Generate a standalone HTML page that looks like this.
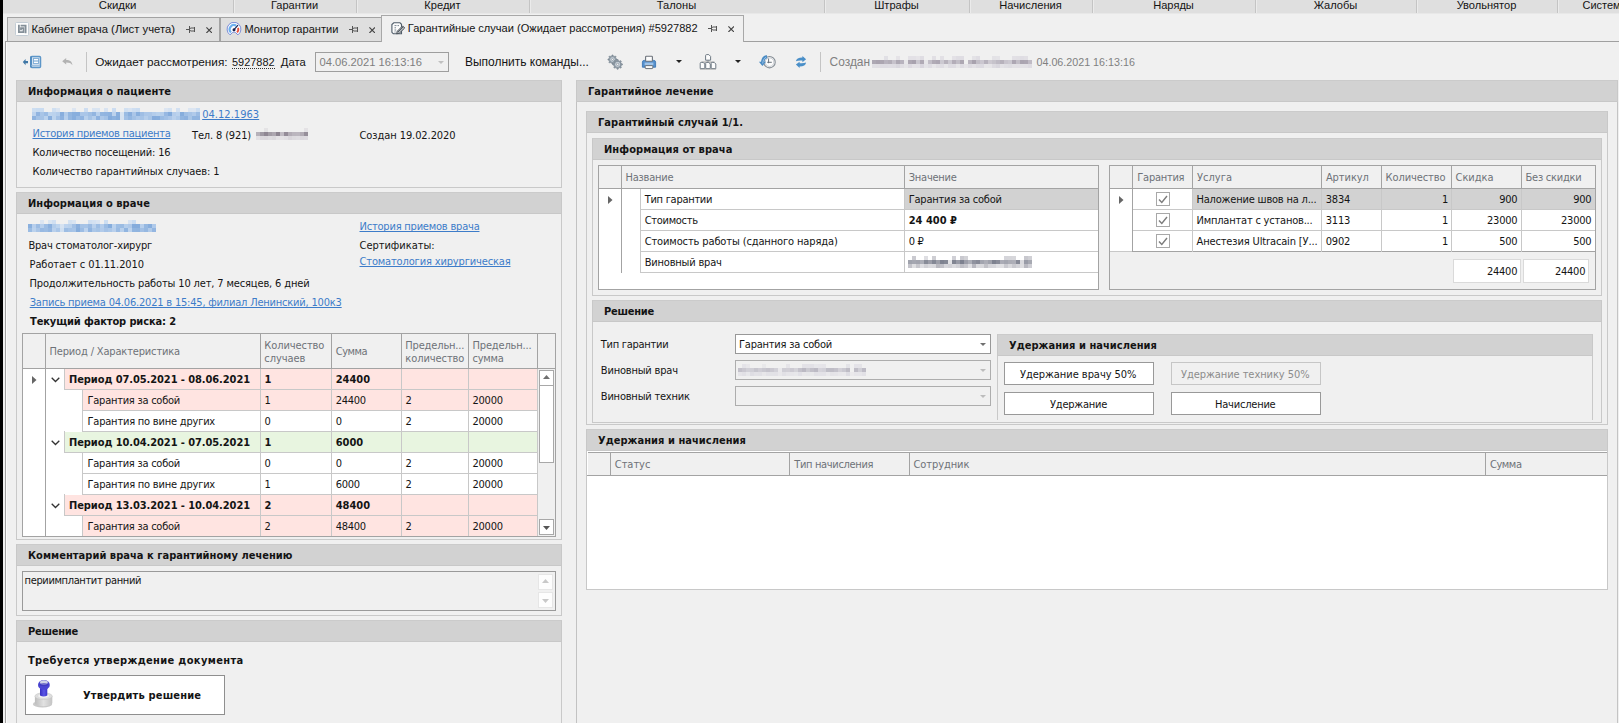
<!DOCTYPE html>
<html lang="ru"><head><meta charset="utf-8"><title>Гарантийные случаи</title>
<style>
html,body{margin:0;padding:0}
body{width:1619px;height:723px;overflow:hidden;background:#f0f0f0;position:relative;color:#141414;
 font-family:"DejaVu Sans Condensed","Liberation Sans",sans-serif;font-size:11px}
div,span,svg{position:absolute;box-sizing:border-box}
.t{font-family:"DejaVu Sans Condensed","Liberation Sans",sans-serif;font-size:11px;line-height:13px;height:13px;white-space:nowrap;letter-spacing:-0.25px}
.b{font-weight:bold;letter-spacing:0}
.s{font-family:"Liberation Sans","DejaVu Sans Condensed",sans-serif;font-size:12px;line-height:14px;height:14px;white-space:nowrap}
.u{text-decoration:underline;text-decoration-skip-ink:none;text-decoration-thickness:1px;color:#3d7cc9}
.h{color:#6e7278}
</style></head>
<body>
<div style="left:0px;top:0px;width:3px;height:723px;background:#000;"></div>
<div style="left:3px;top:0px;width:1616px;height:13px;background:#dfdfdf;"></div>
<div style="left:3px;top:13px;width:1616px;height:1px;background:#e8e8e8;"></div>
<div style="left:233px;top:0px;width:1px;height:13px;background:#c4c4c4;"></div>
<div style="left:234px;top:0px;width:1px;height:13px;background:#ebebeb;"></div>
<div style="left:356px;top:0px;width:1px;height:13px;background:#c4c4c4;"></div>
<div style="left:357px;top:0px;width:1px;height:13px;background:#ebebeb;"></div>
<div style="left:529px;top:0px;width:1px;height:13px;background:#c4c4c4;"></div>
<div style="left:530px;top:0px;width:1px;height:13px;background:#ebebeb;"></div>
<div style="left:824px;top:0px;width:1px;height:13px;background:#c4c4c4;"></div>
<div style="left:825px;top:0px;width:1px;height:13px;background:#ebebeb;"></div>
<div style="left:969px;top:0px;width:1px;height:13px;background:#c4c4c4;"></div>
<div style="left:970px;top:0px;width:1px;height:13px;background:#ebebeb;"></div>
<div style="left:1092px;top:0px;width:1px;height:13px;background:#c4c4c4;"></div>
<div style="left:1093px;top:0px;width:1px;height:13px;background:#ebebeb;"></div>
<div style="left:1255px;top:0px;width:1px;height:13px;background:#c4c4c4;"></div>
<div style="left:1256px;top:0px;width:1px;height:13px;background:#ebebeb;"></div>
<div style="left:1416px;top:0px;width:1px;height:13px;background:#c4c4c4;"></div>
<div style="left:1417px;top:0px;width:1px;height:13px;background:#ebebeb;"></div>
<div style="left:1557px;top:0px;width:1px;height:13px;background:#c4c4c4;"></div>
<div style="left:1558px;top:0px;width:1px;height:13px;background:#ebebeb;"></div>
<span class="s" style="left:17.5px;width:200px;text-align:center;top:-1.95px;font-size:11.40px"><span style="position:static">Скидки</span></span>
<span class="s" style="left:194.5px;width:200px;text-align:center;top:-1.82px;font-size:11.02px"><span style="position:static">Гарантии</span></span>
<span class="s" style="left:342.5px;width:200px;text-align:center;top:-1.85px;font-size:11.10px"><span style="position:static">Кредит</span></span>
<span class="s" style="left:576.5px;width:200px;text-align:center;top:-1.85px;font-size:11.10px"><span style="position:static">Талоны</span></span>
<span class="s" style="left:796.5px;width:200px;text-align:center;top:-1.85px;font-size:11.10px"><span style="position:static">Штрафы</span></span>
<span class="s" style="left:930.5px;width:200px;text-align:center;top:-1.85px;font-size:11.10px"><span style="position:static">Начисления</span></span>
<span class="s" style="left:1073.5px;width:200px;text-align:center;top:-1.85px;font-size:11.10px"><span style="position:static">Наряды</span></span>
<span class="s" style="left:1235.5px;width:200px;text-align:center;top:-1.85px;font-size:11.10px"><span style="position:static">Жалобы</span></span>
<span class="s" style="left:1386.5px;width:200px;text-align:center;top:-1.84px;font-size:11.09px"><span style="position:static">Увольнятор</span></span>
<span class="s" style="top:-1.79px;left:1582.6px;font-size:10.93px;">Система</span>
<div style="left:5px;top:41px;width:1614px;height:1px;background:#a0a0a0;"></div>
<div style="left:7px;top:17px;width:213px;height:24px;background:#dfdfdf;border:1px solid #a3a3a3;border-bottom:none;"></div>
<div style="left:220px;top:17px;width:162px;height:24px;background:#dfdfdf;border:1px solid #a3a3a3;border-bottom:none;"></div>
<div style="left:381px;top:15px;width:363px;height:27px;background:#f0f0f0;border:1px solid #a8a8a8;border-bottom:none;"></div>
<span class="s" style="top:22.09px;left:31.5px;font-size:11.29px;">Кабинет врача (Лист учета)</span>
<span class="s" style="top:22.16px;left:244.4px;font-size:11.09px;">Монитор гарантии</span>
<span class="s" style="top:21.17px;left:407.8px;font-size:11.05px;">Гарантийные случаи (Ожидает рассмотрения) #5927882</span>
<svg style="left:186px;top:26.0px" width="9" height="7" viewBox="0 0 9 7"><path d="M0 3.5H3M3.5 0V7M4 2.5L5 2H8M4 4.5L5 5H8M8.5 1V6" stroke="#555" stroke-width="1" fill="none"/></svg>
<svg style="left:205.8px;top:26.8px" width="6.4" height="6.4" viewBox="0 0 6.4 6.4"><path d="M0.4 0.4L6 6M6 0.4L0.4 6" stroke="#454545" stroke-width="1.15" fill="none"/></svg>
<svg style="left:349px;top:26.0px" width="9" height="7" viewBox="0 0 9 7"><path d="M0 3.5H3M3.5 0V7M4 2.5L5 2H8M4 4.5L5 5H8M8.5 1V6" stroke="#555" stroke-width="1" fill="none"/></svg>
<svg style="left:368.8px;top:26.8px" width="6.4" height="6.4" viewBox="0 0 6.4 6.4"><path d="M0.4 0.4L6 6M6 0.4L0.4 6" stroke="#454545" stroke-width="1.15" fill="none"/></svg>
<svg style="left:708px;top:25.0px" width="9" height="7" viewBox="0 0 9 7"><path d="M0 3.5H3M3.5 0V7M4 2.5L5 2H8M4 4.5L5 5H8M8.5 1V6" stroke="#555" stroke-width="1" fill="none"/></svg>
<svg style="left:727.8px;top:25.8px" width="6.4" height="6.4" viewBox="0 0 6.4 6.4"><path d="M0.4 0.4L6 6M6 0.4L0.4 6" stroke="#454545" stroke-width="1.15" fill="none"/></svg>
<svg style="left:15px;top:22px" width="14" height="14" viewBox="0 0 14 14"><rect x="0.5" y="0.5" width="13" height="13" rx="1" fill="#fdfdfd" stroke="#c3ccd4"/><path d="M3.9 2.8V10.1H8.5V6.2H6V8.2" stroke="#848f98" stroke-width="1.8" fill="none"/><path d="M5.6 3.7H10.6V11.2" stroke="#848f98" stroke-width="1.8" fill="none"/></svg>
<svg style="left:225.5px;top:22px" width="16" height="14" viewBox="0 0 16 14"><path d="M4.04 12.85A6.9 6.9 0 1 1 11.96 12.85L9.7 10.7Q8 9.1 6.3 10.7Z" fill="#fdfdff" stroke="#6b7fd2" stroke-width="0.9" stroke-linejoin="round"/><path d="M4.96 10.44A4.3 4.3 0 0 1 10.15 3.68" stroke="#6db1ee" stroke-width="2.2" fill="none"/><path d="M12.04 5.93A4.3 4.3 0 0 1 11.04 10.44" stroke="#e8503a" stroke-width="1.9" fill="none"/><path d="M8 7.6L12 3.1" stroke="#1a2350" stroke-width="1.2"/><circle cx="8" cy="7.7" r="1.5" fill="#1a2350"/></svg>
<svg style="left:390.5px;top:21.5px" width="15" height="13" viewBox="0 0 15 13"><path d="M2.8 0.8H9L10.5 2.3V11.7H2.3L0.9 10.3V2.6Z" fill="#fcfcfc" stroke="#4f5c69" stroke-width="1.1"/><path d="M3.5 3.6H5.5M6.5 3.6H8M3.5 5.8H5M3.5 8H5.2M3.5 10H4.6" stroke="#6a7783" stroke-width="0.9"/><path d="M5.6 11.8L6.3 9.2L11.6 3.9L13.7 6L8.4 11.2Z" fill="#b8bcc0" stroke="#4a525a" stroke-width="1"/><path d="M7 10L12 5" stroke="#4a525a" stroke-width="0.9"/></svg>
<div style="left:5px;top:41px;width:1px;height:682px;background:#a0a0a0;"></div>
<div style="left:6px;top:42px;width:1px;height:681px;background:#fbfbfb;"></div>
<svg style="left:22px;top:55px" width="20" height="14" viewBox="0 0 20 14"><path d="M0.8 7.1L3.6 4V6H6V8.2H3.6V10.2Z" fill="#3f77a6"/><rect x="8.9" y="1.4" width="9.6" height="11" rx="1" fill="#d3e2f0" stroke="#5d96c8" stroke-width="1.5"/><path d="M9 1.5V12.3" stroke="#4f8bc0" stroke-width="1.8"/><rect x="11.5" y="3.5" width="5" height="5" fill="#fbfdff" stroke="#7caad4" stroke-width="0.9"/><path d="M11.5 6H16.5" stroke="#6b9fce" stroke-width="1"/><path d="M9.5 10.6H18" stroke="#9fc0de" stroke-width="1.4"/></svg>
<svg style="left:62px;top:58px" width="11" height="8" viewBox="0 0 11 8"><path d="M0.2 3.2L4.2 0V2C8 2 10.2 3.8 10.4 7.3C9.2 5.2 7.4 4.6 4.2 4.6V6.5Z" fill="#b2b2b2"/></svg>
<div style="left:86px;top:52px;width:1px;height:20px;background:#c4c4c4;"></div>
<span class="s" style="top:54.91px;left:95.2px;font-size:11.79px;">Ожидает рассмотрения:</span>
<span class="s" style="top:55.21px;left:232px;font-size:10.94px;border-bottom:1px dotted #333;height:14px;">5927882</span>
<span class="s" style="top:55.10px;left:280.8px;font-size:11.24px;">Дата</span>
<div style="left:315px;top:52px;width:134px;height:20px;background:#f0f0f0;border:1px solid #9e9e9e;"></div>
<span class="s" style="top:55.13px;left:319.5px;color:#7e7e7e;font-size:11.18px;">04.06.2021 16:13:16</span>
<svg style="left:437.5px;top:60.5px" width="6" height="3" viewBox="0 0 6 3"><path d="M0 0H6L3.0 3Z" fill="#c0c0c0"/></svg>
<span class="s" style="top:54.85px;left:465px;font-size:11.98px;">Выполнить команды...</span>
<svg style="left:607px;top:54px" width="16" height="16" viewBox="0 0 16 16"><path d="M10.08 5.05L10.08 5.95L8.76 6.49L8.50 7.10L9.06 8.42L8.42 9.06L7.10 8.50L6.49 8.76L5.95 10.08L5.05 10.08L4.51 8.76L3.90 8.50L2.58 9.06L1.94 8.42L2.50 7.10L2.24 6.49L0.92 5.95L0.92 5.05L2.24 4.51L2.50 3.90L1.94 2.58L2.58 1.94L3.90 2.50L4.51 2.24L5.05 0.92L5.95 0.92L6.49 2.24L7.10 2.50L8.42 1.94L9.06 2.58L8.50 3.90L8.76 4.51Z" fill="#8c98a3" stroke="#6f7c88" stroke-width="0.5"/><circle cx="5.5" cy="5.5" r="2.2" fill="#d5dee5"/><circle cx="5.5" cy="5.5" r="1.1" fill="#f0f0f0" stroke="#75828e" stroke-width="0.6"/><path d="M15.48 9.92L15.48 10.88L14.07 11.45L13.80 12.11L14.39 13.51L13.71 14.19L12.31 13.60L11.65 13.87L11.08 15.28L10.12 15.28L9.55 13.87L8.89 13.60L7.49 14.19L6.81 13.51L7.40 12.11L7.13 11.45L5.72 10.88L5.72 9.92L7.13 9.35L7.40 8.69L6.81 7.29L7.49 6.61L8.89 7.20L9.55 6.93L10.12 5.52L11.08 5.52L11.65 6.93L12.31 7.20L13.71 6.61L14.39 7.29L13.80 8.69L14.07 9.35Z" fill="#8c98a3" stroke="#6f7c88" stroke-width="0.5"/><circle cx="10.6" cy="10.4" r="2.4" fill="#d5dee5"/><circle cx="10.6" cy="10.4" r="1.2" fill="#f0f0f0" stroke="#75828e" stroke-width="0.6"/></svg>
<svg style="left:641px;top:54px" width="16" height="16" viewBox="0 0 16 16"><path d="M1.4 13.2V8.2Q1.4 6.4 3.2 6.4H12.8Q14.6 6.4 14.6 8.2V13.2Z" fill="#5590cd" stroke="#3e78b6" stroke-width="0.9"/><rect x="4.6" y="2.2" width="6.8" height="5" rx="0.8" fill="#fdfdfd" stroke="#6c727a" stroke-width="1.1"/><rect x="3.6" y="8.6" width="8.8" height="2.4" fill="#9fc3e8"/><rect x="4.2" y="11.6" width="7.6" height="3" rx="0.6" fill="#fafafa" stroke="#6c727a" stroke-width="1"/></svg>
<svg style="left:675.5px;top:60.0px" width="6" height="3" viewBox="0 0 6 3"><path d="M0 0H6L3.0 3Z" fill="#222"/></svg>
<svg style="left:699px;top:53px" width="18" height="17" viewBox="0 0 18 17"><path d="M9 7V9.2M3.2 10.5V9.2H14.8V10.5" fill="none" stroke="#a9a9a9" stroke-width="1.3"/><g fill="#fdfdfd" stroke="#6f7a84" stroke-width="1"><path d="M6.6 7.2V2.6Q6.6 1.6 7.6 1.6H9.8L11.6 3.4V7.2Z"/><path d="M1.2 15.6V10.4Q1.2 9.4 2.2 9.4H4.2L5.8 11V15.6Z"/><path d="M6.7 15.6V10.4Q6.7 9.4 7.7 9.4H9.7L11.3 11V15.6Z"/><path d="M12.2 15.6V10.4Q12.2 9.4 13.2 9.4H15.2L16.8 11V15.6Z"/></g><path d="M1 16.3H17" stroke="#b5b5b5" stroke-width="0.9"/></svg>
<svg style="left:734.5px;top:60.0px" width="6" height="3" viewBox="0 0 6 3"><path d="M0 0H6L3.0 3Z" fill="#222"/></svg>
<svg style="left:758px;top:54px" width="18" height="16" viewBox="0 0 18 16"><circle cx="11.5" cy="8.2" r="5.7" fill="#fcfcfc" stroke="#848c94" stroke-width="1.1"/><circle cx="11.5" cy="8.2" r="4.3" fill="none" stroke="#bcc2c8" stroke-width="0.8"/><path d="M10.6 4.6V9.2M9.2 8.3H13.8" stroke="#68717a" stroke-width="1" fill="none"/><path d="M9 2.6Q5 3.2 4.6 8.4" stroke="#4b8cc4" stroke-width="3.2" fill="none"/><path d="M0.9 7.8H8L4.4 12Z" fill="#4b8cc4"/><path d="M8 3.4Q5.2 4.4 4.7 9.5" stroke="#9cc4e8" stroke-width="1" fill="none"/></svg>
<svg style="left:795px;top:55px" width="12" height="14" viewBox="0 0 12 14"><g fill="#4a8fc8"><path id="ra" d="M0.9 6.3C1.2 3.6 3.4 2.4 7.4 2.4V0.9L11.1 4.3L7.4 7.2V5.6C4.6 5.4 2.6 5.6 0.9 6.3Z"/><path d="M0.9 6.3C1.2 3.6 3.4 2.4 7.4 2.4V0.9L11.1 4.3L7.4 7.2V5.6C4.6 5.4 2.6 5.6 0.9 6.3Z" transform="rotate(180 6 6.95)"/></g></svg>
<div style="left:820px;top:52px;width:1px;height:20px;background:#c4c4c4;"></div>
<span class="s" style="top:54.87px;left:829.6px;color:#808080;font-size:11.93px;">Создан</span>
<span class="s" style="top:55.28px;left:1036.5px;color:#808080;font-size:10.73px;">04.06.2021 16:13:16</span>
<svg style="left:872px;top:56px;filter:blur(0.35px);opacity:1.0" width="160" height="12" viewBox="0 0 160 12" shape-rendering="crispEdges"><rect x="12" y="0" width="4" height="4" fill="#e1e0e5"/><rect x="24" y="0" width="4" height="4" fill="#e5e3e7"/><rect x="36" y="0" width="4" height="4" fill="#e3e1e6"/><rect x="40" y="0" width="4" height="4" fill="#e3e1e6"/><rect x="44" y="0" width="4" height="4" fill="#e6e4e8"/><rect x="48" y="0" width="4" height="4" fill="#dfdde3"/><rect x="60" y="0" width="4" height="4" fill="#e1dfe4"/><rect x="68" y="0" width="4" height="4" fill="#e2e0e5"/><rect x="80" y="0" width="4" height="4" fill="#e3e1e6"/><rect x="84" y="0" width="4" height="4" fill="#dfdde3"/><rect x="88" y="0" width="4" height="4" fill="#dfdde3"/><rect x="100" y="0" width="4" height="4" fill="#e3e2e6"/><rect x="104" y="0" width="4" height="4" fill="#dfdde3"/><rect x="120" y="0" width="4" height="4" fill="#e3e2e6"/><rect x="124" y="0" width="4" height="4" fill="#e4e3e7"/><rect x="140" y="0" width="4" height="4" fill="#e2e0e5"/><rect x="144" y="0" width="4" height="4" fill="#e1dfe4"/><rect x="148" y="0" width="4" height="4" fill="#dfdde3"/><rect x="152" y="0" width="4" height="4" fill="#e1dfe4"/><rect x="0" y="4" width="4" height="4" fill="#ada8b3"/><rect x="4" y="4" width="4" height="4" fill="#a9a3af"/><rect x="8" y="4" width="4" height="4" fill="#aca6b1"/><rect x="12" y="4" width="4" height="4" fill="#b8b3be"/><rect x="16" y="4" width="4" height="4" fill="#b3aeb8"/><rect x="20" y="4" width="4" height="4" fill="#c6c2cb"/><rect x="24" y="4" width="4" height="4" fill="#aea9b4"/><rect x="28" y="4" width="4" height="4" fill="#b8b3be"/><rect x="32" y="4" width="4" height="4" fill="#e8e7ea"/><rect x="36" y="4" width="4" height="4" fill="#aea8b3"/><rect x="40" y="4" width="4" height="4" fill="#a8a2ae"/><rect x="44" y="4" width="4" height="4" fill="#cac7cf"/><rect x="48" y="4" width="4" height="4" fill="#b0aab5"/><rect x="52" y="4" width="4" height="4" fill="#e7e6e9"/><rect x="56" y="4" width="4" height="4" fill="#c3bfc8"/><rect x="60" y="4" width="4" height="4" fill="#b1abb6"/><rect x="64" y="4" width="4" height="4" fill="#ada7b3"/><rect x="68" y="4" width="4" height="4" fill="#ccc9d1"/><rect x="72" y="4" width="4" height="4" fill="#b7b2bc"/><rect x="76" y="4" width="4" height="4" fill="#ccc9d1"/><rect x="80" y="4" width="4" height="4" fill="#b3adb8"/><rect x="84" y="4" width="4" height="4" fill="#c1bdc6"/><rect x="88" y="4" width="4" height="4" fill="#ada7b2"/><rect x="96" y="4" width="4" height="4" fill="#bbb6c0"/><rect x="100" y="4" width="4" height="4" fill="#a8a2ae"/><rect x="104" y="4" width="4" height="4" fill="#c2bec7"/><rect x="108" y="4" width="4" height="4" fill="#cbc7d0"/><rect x="112" y="4" width="4" height="4" fill="#b7b2bd"/><rect x="116" y="4" width="4" height="4" fill="#cdc9d1"/><rect x="120" y="4" width="4" height="4" fill="#c6c3cb"/><rect x="124" y="4" width="4" height="4" fill="#bebac4"/><rect x="128" y="4" width="4" height="4" fill="#b7b2bc"/><rect x="132" y="4" width="4" height="4" fill="#c8c4cd"/><rect x="136" y="4" width="4" height="4" fill="#ccc9d1"/><rect x="140" y="4" width="4" height="4" fill="#ada7b3"/><rect x="144" y="4" width="4" height="4" fill="#c2bec7"/><rect x="148" y="4" width="4" height="4" fill="#aaa4b0"/><rect x="152" y="4" width="4" height="4" fill="#aca6b2"/><rect x="156" y="4" width="4" height="4" fill="#c0bbc5"/><rect x="0" y="8" width="4" height="4" fill="#e0dfe4"/><rect x="4" y="8" width="4" height="4" fill="#e0dee3"/><rect x="8" y="8" width="4" height="4" fill="#dedce2"/><rect x="12" y="8" width="4" height="4" fill="#dedce2"/><rect x="16" y="8" width="4" height="4" fill="#dfdde3"/><rect x="20" y="8" width="4" height="4" fill="#dedce2"/><rect x="24" y="8" width="4" height="4" fill="#d9d7de"/><rect x="28" y="8" width="4" height="4" fill="#e0dee3"/><rect x="32" y="8" width="4" height="4" fill="#e5e4e7"/><rect x="36" y="8" width="4" height="4" fill="#dddae1"/><rect x="40" y="8" width="4" height="4" fill="#e4e2e6"/><rect x="44" y="8" width="4" height="4" fill="#e3e1e6"/><rect x="48" y="8" width="4" height="4" fill="#d9d6de"/><rect x="52" y="8" width="4" height="4" fill="#e4e3e7"/><rect x="56" y="8" width="4" height="4" fill="#dfdde3"/><rect x="60" y="8" width="4" height="4" fill="#e7e6e9"/><rect x="64" y="8" width="4" height="4" fill="#e1dfe4"/><rect x="68" y="8" width="4" height="4" fill="#dfdde3"/><rect x="72" y="8" width="4" height="4" fill="#e7e6e9"/><rect x="76" y="8" width="4" height="4" fill="#dedce2"/><rect x="80" y="8" width="4" height="4" fill="#dedce2"/><rect x="84" y="8" width="4" height="4" fill="#e6e5e8"/><rect x="88" y="8" width="4" height="4" fill="#dedce2"/><rect x="92" y="8" width="4" height="4" fill="#e5e3e7"/><rect x="96" y="8" width="4" height="4" fill="#dddbe1"/><rect x="100" y="8" width="4" height="4" fill="#e2e0e5"/><rect x="104" y="8" width="4" height="4" fill="#dddbe1"/><rect x="108" y="8" width="4" height="4" fill="#dcdae1"/><rect x="112" y="8" width="4" height="4" fill="#e7e6e9"/><rect x="116" y="8" width="4" height="4" fill="#e6e5e8"/><rect x="120" y="8" width="4" height="4" fill="#dddbe1"/><rect x="124" y="8" width="4" height="4" fill="#d9d7de"/><rect x="128" y="8" width="4" height="4" fill="#e3e2e6"/><rect x="132" y="8" width="4" height="4" fill="#e0dfe4"/><rect x="136" y="8" width="4" height="4" fill="#dedde2"/><rect x="140" y="8" width="4" height="4" fill="#e2e1e5"/><rect x="144" y="8" width="4" height="4" fill="#e2e0e5"/><rect x="148" y="8" width="4" height="4" fill="#e2e1e5"/><rect x="152" y="8" width="4" height="4" fill="#e2e0e5"/><rect x="156" y="8" width="4" height="4" fill="#dedce2"/></svg>
<div style="left:16px;top:80px;width:546px;height:22px;background:#d2d2d2;border:1px solid #c8c8c8;border-top-color:#cbcbcb;"></div>
<div style="left:16px;top:102px;width:546px;height:86px;border:1px solid #c9c9c9;border-top:none;"></div>
<span class="t b" style="top:84.70px;left:28px;letter-spacing:0.062px;">Информация о пациенте</span>
<div style="left:16px;top:192px;width:546px;height:22px;background:#d2d2d2;border:1px solid #c8c8c8;border-top-color:#cbcbcb;"></div>
<div style="left:16px;top:214px;width:546px;height:326px;border:1px solid #c9c9c9;border-top:none;"></div>
<span class="t b" style="top:196.70px;left:28px;letter-spacing:0.031px;">Информация о враче</span>
<div style="left:16px;top:544px;width:546px;height:22px;background:#d2d2d2;border:1px solid #c8c8c8;border-top-color:#cbcbcb;"></div>
<div style="left:16px;top:566px;width:546px;height:50px;border:1px solid #c9c9c9;border-top:none;"></div>
<span class="t b" style="top:548.70px;left:28px;letter-spacing:0.036px;">Комментарий врача к гарантийному лечению</span>
<div style="left:16px;top:620px;width:546px;height:22px;background:#d2d2d2;border:1px solid #c8c8c8;border-top-color:#cbcbcb;"></div>
<div style="left:16px;top:642px;width:546px;height:99px;border:1px solid #c9c9c9;border-top:none;"></div>
<span class="t b" style="top:624.70px;left:28px;letter-spacing:-0.241px;">Решение</span>
<span class="t u" style="top:107.70px;left:202.2px;letter-spacing:0.034px;">04.12.1963</span>
<svg style="left:32px;top:108px;filter:blur(0.35px);opacity:1.0" width="168" height="12" viewBox="0 0 168 12" shape-rendering="crispEdges"><rect x="0" y="0" width="4" height="4" fill="#cddef1"/><rect x="4" y="0" width="4" height="4" fill="#c9dcf1"/><rect x="8" y="0" width="4" height="4" fill="#cadcf1"/><rect x="20" y="0" width="4" height="4" fill="#cfdff1"/><rect x="24" y="0" width="4" height="4" fill="#dae4f1"/><rect x="40" y="0" width="4" height="4" fill="#dce5f1"/><rect x="52" y="0" width="4" height="4" fill="#cdddf1"/><rect x="60" y="0" width="4" height="4" fill="#d9e4f1"/><rect x="64" y="0" width="4" height="4" fill="#d9e4f1"/><rect x="72" y="0" width="4" height="4" fill="#d8e3f1"/><rect x="80" y="0" width="4" height="4" fill="#cbdcf1"/><rect x="92" y="0" width="4" height="4" fill="#d1e0f1"/><rect x="96" y="0" width="4" height="4" fill="#d8e3f1"/><rect x="100" y="0" width="4" height="4" fill="#cedef1"/><rect x="104" y="0" width="4" height="4" fill="#cadcf1"/><rect x="132" y="0" width="4" height="4" fill="#dce5f1"/><rect x="136" y="0" width="4" height="4" fill="#d5e2f1"/><rect x="144" y="0" width="4" height="4" fill="#d2e0f1"/><rect x="156" y="0" width="4" height="4" fill="#dbe5f1"/><rect x="160" y="0" width="4" height="4" fill="#dce5f1"/><rect x="164" y="0" width="4" height="4" fill="#cbddf1"/><rect x="0" y="4" width="4" height="4" fill="#bdd3ee"/><rect x="4" y="4" width="4" height="4" fill="#91b4e0"/><rect x="8" y="4" width="4" height="4" fill="#a9c5e7"/><rect x="12" y="4" width="4" height="4" fill="#9dbde4"/><rect x="16" y="4" width="4" height="4" fill="#bdd4ee"/><rect x="20" y="4" width="4" height="4" fill="#bbd2ed"/><rect x="24" y="4" width="4" height="4" fill="#b4cdeb"/><rect x="28" y="4" width="4" height="4" fill="#88aedd"/><rect x="32" y="4" width="4" height="4" fill="#b3ccea"/><rect x="36" y="4" width="4" height="4" fill="#93b6e0"/><rect x="40" y="4" width="4" height="4" fill="#89afdd"/><rect x="44" y="4" width="4" height="4" fill="#88aedd"/><rect x="48" y="4" width="4" height="4" fill="#aac6e8"/><rect x="52" y="4" width="4" height="4" fill="#aac6e8"/><rect x="56" y="4" width="4" height="4" fill="#a0bfe4"/><rect x="60" y="4" width="4" height="4" fill="#92b5e0"/><rect x="64" y="4" width="4" height="4" fill="#b8d0ec"/><rect x="68" y="4" width="4" height="4" fill="#93b6e0"/><rect x="72" y="4" width="4" height="4" fill="#91b4e0"/><rect x="76" y="4" width="4" height="4" fill="#8db2df"/><rect x="80" y="4" width="4" height="4" fill="#bcd2ed"/><rect x="84" y="4" width="4" height="4" fill="#88aedd"/><rect x="88" y="4" width="4" height="4" fill="#d9e4f1"/><rect x="92" y="4" width="4" height="4" fill="#9bbce3"/><rect x="96" y="4" width="4" height="4" fill="#8aafdd"/><rect x="100" y="4" width="4" height="4" fill="#abc6e8"/><rect x="104" y="4" width="4" height="4" fill="#89afdd"/><rect x="108" y="4" width="4" height="4" fill="#9fbee4"/><rect x="112" y="4" width="4" height="4" fill="#acc7e8"/><rect x="116" y="4" width="4" height="4" fill="#acc7e8"/><rect x="120" y="4" width="4" height="4" fill="#b4cdeb"/><rect x="124" y="4" width="4" height="4" fill="#b9d1ec"/><rect x="128" y="4" width="4" height="4" fill="#b5ceeb"/><rect x="132" y="4" width="4" height="4" fill="#97b8e2"/><rect x="136" y="4" width="4" height="4" fill="#85acdc"/><rect x="140" y="4" width="4" height="4" fill="#b5cdeb"/><rect x="144" y="4" width="4" height="4" fill="#bbd2ed"/><rect x="148" y="4" width="4" height="4" fill="#86addc"/><rect x="152" y="4" width="4" height="4" fill="#a0bfe4"/><rect x="156" y="4" width="4" height="4" fill="#a7c4e7"/><rect x="160" y="4" width="4" height="4" fill="#b0caea"/><rect x="164" y="4" width="4" height="4" fill="#9cbce3"/><rect x="0" y="8" width="4" height="4" fill="#8fb3df"/><rect x="4" y="8" width="4" height="4" fill="#a4c2e6"/><rect x="8" y="8" width="4" height="4" fill="#a6c3e6"/><rect x="12" y="8" width="4" height="4" fill="#bbd2ed"/><rect x="16" y="8" width="4" height="4" fill="#8aafdd"/><rect x="20" y="8" width="4" height="4" fill="#bcd3ed"/><rect x="24" y="8" width="4" height="4" fill="#a2c0e5"/><rect x="28" y="8" width="4" height="4" fill="#8eb2df"/><rect x="32" y="8" width="4" height="4" fill="#b7cfec"/><rect x="36" y="8" width="4" height="4" fill="#94b7e1"/><rect x="40" y="8" width="4" height="4" fill="#88aedd"/><rect x="44" y="8" width="4" height="4" fill="#9abbe3"/><rect x="48" y="8" width="4" height="4" fill="#91b4e0"/><rect x="52" y="8" width="4" height="4" fill="#b8d0ec"/><rect x="56" y="8" width="4" height="4" fill="#a5c3e6"/><rect x="60" y="8" width="4" height="4" fill="#b5ceeb"/><rect x="64" y="8" width="4" height="4" fill="#8eb2df"/><rect x="68" y="8" width="4" height="4" fill="#adc8e9"/><rect x="72" y="8" width="4" height="4" fill="#a4c2e6"/><rect x="76" y="8" width="4" height="4" fill="#85acdc"/><rect x="80" y="8" width="4" height="4" fill="#8db2df"/><rect x="84" y="8" width="4" height="4" fill="#86addc"/><rect x="88" y="8" width="4" height="4" fill="#d7e3f1"/><rect x="92" y="8" width="4" height="4" fill="#a2c0e5"/><rect x="96" y="8" width="4" height="4" fill="#94b7e1"/><rect x="100" y="8" width="4" height="4" fill="#a3c1e5"/><rect x="104" y="8" width="4" height="4" fill="#adc8e9"/><rect x="108" y="8" width="4" height="4" fill="#a7c4e7"/><rect x="112" y="8" width="4" height="4" fill="#b6ceeb"/><rect x="116" y="8" width="4" height="4" fill="#a8c5e7"/><rect x="120" y="8" width="4" height="4" fill="#86acdc"/><rect x="124" y="8" width="4" height="4" fill="#87aedd"/><rect x="128" y="8" width="4" height="4" fill="#9abbe3"/><rect x="132" y="8" width="4" height="4" fill="#a2c0e5"/><rect x="136" y="8" width="4" height="4" fill="#abc6e8"/><rect x="140" y="8" width="4" height="4" fill="#b9d0ec"/><rect x="144" y="8" width="4" height="4" fill="#aec9e9"/><rect x="148" y="8" width="4" height="4" fill="#91b5e0"/><rect x="152" y="8" width="4" height="4" fill="#8db1de"/><rect x="156" y="8" width="4" height="4" fill="#a9c6e7"/><rect x="160" y="8" width="4" height="4" fill="#91b5e0"/><rect x="164" y="8" width="4" height="4" fill="#92b5e0"/></svg>
<span class="t u" style="top:126.70px;left:32.5px;letter-spacing:-0.264px;">История приемов пациента</span>
<span class="t" style="top:128.70px;left:192px;letter-spacing:-0.150px;">Тел. 8 (921)</span>
<span class="t" style="top:128.70px;left:359.5px;letter-spacing:-0.083px;">Создан 19.02.2020</span>
<svg style="left:256px;top:128px;filter:blur(0.35px);opacity:1.0" width="52" height="12" viewBox="0 0 52 12" shape-rendering="crispEdges"><rect x="8" y="0" width="4" height="4" fill="#e4e3e5"/><rect x="48" y="0" width="4" height="4" fill="#e4e2e5"/><rect x="0" y="4" width="4" height="4" fill="#b6b1b9"/><rect x="4" y="4" width="4" height="4" fill="#a09aa4"/><rect x="8" y="4" width="4" height="4" fill="#8f8793"/><rect x="12" y="4" width="4" height="4" fill="#a39da6"/><rect x="16" y="4" width="4" height="4" fill="#ada7b0"/><rect x="20" y="4" width="4" height="4" fill="#8d8591"/><rect x="24" y="4" width="4" height="4" fill="#c0bbc3"/><rect x="28" y="4" width="4" height="4" fill="#948c98"/><rect x="32" y="4" width="4" height="4" fill="#b3adb6"/><rect x="36" y="4" width="4" height="4" fill="#bbb6be"/><rect x="40" y="4" width="4" height="4" fill="#bcb7bf"/><rect x="44" y="4" width="4" height="4" fill="#b2acb5"/><rect x="48" y="4" width="4" height="4" fill="#968f9a"/><rect x="0" y="8" width="4" height="4" fill="#e2e0e3"/><rect x="4" y="8" width="4" height="4" fill="#dbd8dd"/><rect x="8" y="8" width="4" height="4" fill="#dad7dc"/><rect x="12" y="8" width="4" height="4" fill="#dedce0"/><rect x="16" y="8" width="4" height="4" fill="#dbd9dd"/><rect x="20" y="8" width="4" height="4" fill="#e4e2e5"/><rect x="24" y="8" width="4" height="4" fill="#e4e2e5"/><rect x="28" y="8" width="4" height="4" fill="#e1dfe3"/><rect x="32" y="8" width="4" height="4" fill="#d9d6db"/><rect x="36" y="8" width="4" height="4" fill="#dddbdf"/><rect x="40" y="8" width="4" height="4" fill="#dfdde1"/><rect x="44" y="8" width="4" height="4" fill="#dbd8dd"/><rect x="48" y="8" width="4" height="4" fill="#dddadf"/></svg>
<span class="t" style="top:145.70px;left:32.5px;letter-spacing:-0.162px;">Количество посещений: 16</span>
<span class="t" style="top:164.70px;left:32.5px;letter-spacing:-0.098px;">Количество гарантийных случаев: 1</span>
<span class="t" style="top:238.70px;left:28.4px;letter-spacing:-0.191px;">Врач стоматолог-хирург</span>
<svg style="left:28px;top:220px;filter:blur(0.35px);opacity:1.0" width="128" height="12" viewBox="0 0 128 12" shape-rendering="crispEdges"><rect x="12" y="0" width="4" height="4" fill="#dce5f1"/><rect x="20" y="0" width="4" height="4" fill="#dae5f1"/><rect x="24" y="0" width="4" height="4" fill="#d0dff1"/><rect x="40" y="0" width="4" height="4" fill="#d3e1f1"/><rect x="44" y="0" width="4" height="4" fill="#d9e4f1"/><rect x="60" y="0" width="4" height="4" fill="#d0dff1"/><rect x="64" y="0" width="4" height="4" fill="#d4e1f1"/><rect x="68" y="0" width="4" height="4" fill="#dae4f1"/><rect x="76" y="0" width="4" height="4" fill="#cddef1"/><rect x="100" y="0" width="4" height="4" fill="#d8e3f1"/><rect x="104" y="0" width="4" height="4" fill="#cadcf1"/><rect x="0" y="4" width="4" height="4" fill="#8ab0de"/><rect x="4" y="4" width="4" height="4" fill="#b8cfec"/><rect x="8" y="4" width="4" height="4" fill="#9cbce3"/><rect x="12" y="4" width="4" height="4" fill="#b7cfec"/><rect x="16" y="4" width="4" height="4" fill="#9dbde4"/><rect x="20" y="4" width="4" height="4" fill="#8bb0de"/><rect x="24" y="4" width="4" height="4" fill="#b2ccea"/><rect x="28" y="4" width="4" height="4" fill="#bdd4ee"/><rect x="32" y="4" width="4" height="4" fill="#d5e2f1"/><rect x="36" y="4" width="4" height="4" fill="#bdd3ee"/><rect x="40" y="4" width="4" height="4" fill="#b9d1ec"/><rect x="44" y="4" width="4" height="4" fill="#a2c0e5"/><rect x="48" y="4" width="4" height="4" fill="#8aafdd"/><rect x="52" y="4" width="4" height="4" fill="#a6c3e6"/><rect x="56" y="4" width="4" height="4" fill="#a7c4e7"/><rect x="60" y="4" width="4" height="4" fill="#9abae2"/><rect x="64" y="4" width="4" height="4" fill="#b9d0ec"/><rect x="68" y="4" width="4" height="4" fill="#9dbde4"/><rect x="72" y="4" width="4" height="4" fill="#b4cdeb"/><rect x="76" y="4" width="4" height="4" fill="#9bbce3"/><rect x="80" y="4" width="4" height="4" fill="#87aedd"/><rect x="84" y="4" width="4" height="4" fill="#bbd2ed"/><rect x="88" y="4" width="4" height="4" fill="#9ebee4"/><rect x="92" y="4" width="4" height="4" fill="#9bbce3"/><rect x="96" y="4" width="4" height="4" fill="#b5ceeb"/><rect x="100" y="4" width="4" height="4" fill="#afc9e9"/><rect x="104" y="4" width="4" height="4" fill="#85acdc"/><rect x="108" y="4" width="4" height="4" fill="#85acdc"/><rect x="112" y="4" width="4" height="4" fill="#b7cfec"/><rect x="116" y="4" width="4" height="4" fill="#96b8e1"/><rect x="120" y="4" width="4" height="4" fill="#88aedd"/><rect x="124" y="4" width="4" height="4" fill="#b0caea"/><rect x="0" y="8" width="4" height="4" fill="#9bbce3"/><rect x="4" y="8" width="4" height="4" fill="#bbd2ed"/><rect x="8" y="8" width="4" height="4" fill="#a9c5e7"/><rect x="12" y="8" width="4" height="4" fill="#98b9e2"/><rect x="16" y="8" width="4" height="4" fill="#9cbce3"/><rect x="20" y="8" width="4" height="4" fill="#92b5e0"/><rect x="24" y="8" width="4" height="4" fill="#b9d0ec"/><rect x="28" y="8" width="4" height="4" fill="#aac6e8"/><rect x="32" y="8" width="4" height="4" fill="#cfdff1"/><rect x="36" y="8" width="4" height="4" fill="#9dbde3"/><rect x="40" y="8" width="4" height="4" fill="#a4c2e6"/><rect x="44" y="8" width="4" height="4" fill="#a7c4e7"/><rect x="48" y="8" width="4" height="4" fill="#86addc"/><rect x="52" y="8" width="4" height="4" fill="#9dbde4"/><rect x="56" y="8" width="4" height="4" fill="#bdd3ee"/><rect x="60" y="8" width="4" height="4" fill="#90b4e0"/><rect x="64" y="8" width="4" height="4" fill="#abc7e8"/><rect x="68" y="8" width="4" height="4" fill="#a5c3e6"/><rect x="72" y="8" width="4" height="4" fill="#b2cbea"/><rect x="76" y="8" width="4" height="4" fill="#a5c2e6"/><rect x="80" y="8" width="4" height="4" fill="#abc7e8"/><rect x="84" y="8" width="4" height="4" fill="#b9d0ec"/><rect x="88" y="8" width="4" height="4" fill="#9abbe3"/><rect x="92" y="8" width="4" height="4" fill="#b8d0ec"/><rect x="96" y="8" width="4" height="4" fill="#91b5e0"/><rect x="100" y="8" width="4" height="4" fill="#bdd3ed"/><rect x="104" y="8" width="4" height="4" fill="#91b5e0"/><rect x="108" y="8" width="4" height="4" fill="#90b4df"/><rect x="112" y="8" width="4" height="4" fill="#a2c0e5"/><rect x="116" y="8" width="4" height="4" fill="#96b8e1"/><rect x="120" y="8" width="4" height="4" fill="#b0cae9"/><rect x="124" y="8" width="4" height="4" fill="#94b6e1"/></svg>
<span class="t" style="top:257.70px;left:29.5px;letter-spacing:-0.083px;">Работает с 01.11.2010</span>
<span class="t" style="top:276.70px;left:29.5px;letter-spacing:-0.142px;">Продолжительность работы 10 лет, 7 месяцев, 6 дней</span>
<span class="t u" style="top:295.70px;left:29.7px;letter-spacing:-0.194px;">Запись приема 04.06.2021 в 15:45, филиал Ленинский, 100к3</span>
<span class="t b" style="top:314.70px;left:30px;letter-spacing:-0.119px;">Текущий фактор риска: 2</span>
<span class="t u" style="top:219.70px;left:359.5px;letter-spacing:-0.207px;">История приемов врача</span>
<span class="t" style="top:238.70px;left:359.5px;letter-spacing:-0.027px;">Сертификаты:</span>
<span class="t u" style="top:254.70px;left:359.5px;letter-spacing:-0.150px;">Стоматология хирургическая</span>
<div style="left:22px;top:333px;width:534px;height:204px;background:#fff;border:1px solid #a3a3a3;"></div>
<div style="left:23px;top:334px;width:532px;height:34px;background:#f0f0f0;"></div>
<div style="left:22px;top:368px;width:533px;height:1px;background:#a3a3a3;"></div>
<div style="left:45px;top:333px;width:1px;height:35px;background:#a3a3a3;"></div>
<div style="left:260px;top:333px;width:1px;height:35px;background:#a3a3a3;"></div>
<div style="left:331px;top:333px;width:1px;height:35px;background:#a3a3a3;"></div>
<div style="left:401px;top:333px;width:1px;height:35px;background:#a3a3a3;"></div>
<div style="left:468px;top:333px;width:1px;height:35px;background:#a3a3a3;"></div>
<div style="left:537px;top:333px;width:1px;height:35px;background:#a3a3a3;"></div>
<span class="t h" style="top:344.70px;left:49.5px;letter-spacing:-0.160px;">Период / Характеристика</span>
<span class="t h" style="top:338.70px;left:264.3px;letter-spacing:-0.087px;">Количество</span>
<span class="t h" style="top:351.70px;left:264.3px;letter-spacing:-0.067px;">случаев</span>
<span class="t h" style="top:344.70px;left:335.7px;letter-spacing:-0.453px;">Сумма</span>
<span class="t h" style="top:338.70px;left:405.3px;letter-spacing:-0.165px;">Предельн...</span>
<span class="t h" style="top:351.70px;left:405.3px;letter-spacing:-0.083px;">количество</span>
<span class="t h" style="top:338.70px;left:472.5px;letter-spacing:-0.165px;">Предельн...</span>
<span class="t h" style="top:351.70px;left:472.5px;letter-spacing:-0.259px;">сумма</span>
<div style="left:65px;top:369px;width:472px;height:20px;background:#ffe4e1;"></div>
<div style="left:64px;top:389px;width:473px;height:1px;background:#c8c8c8;"></div>
<div style="left:64px;top:369px;width:1px;height:21px;background:#c8c8c8;"></div>
<div style="left:260px;top:369px;width:1px;height:20px;background:#c8c8c8;"></div>
<div style="left:331px;top:369px;width:1px;height:20px;background:#c8c8c8;"></div>
<div style="left:401px;top:369px;width:1px;height:20px;background:#c8c8c8;"></div>
<div style="left:468px;top:369px;width:1px;height:20px;background:#c8c8c8;"></div>
<span class="t b" style="top:372.70px;left:69px;letter-spacing:-0.082px;">Период 07.05.2021 - 08.06.2021</span>
<svg style="left:51px;top:377px" width="9" height="6" viewBox="0 0 9 6"><path d="M0.7 0.7L4.5 4.5L8.3 0.7" stroke="#333" stroke-width="1.3" fill="none"/></svg>
<span class="t b" style="top:372.70px;left:264.5px;">1</span>
<span class="t b" style="top:372.70px;left:335.7px;">24400</span>
<div style="left:83px;top:390px;width:454px;height:20px;background:#ffe4e1;"></div>
<div style="left:82px;top:410px;width:455px;height:1px;background:#c8c8c8;"></div>
<div style="left:82px;top:389px;width:1px;height:21px;background:#c8c8c8;"></div>
<div style="left:260px;top:390px;width:1px;height:20px;background:#c8c8c8;"></div>
<div style="left:331px;top:390px;width:1px;height:20px;background:#c8c8c8;"></div>
<div style="left:401px;top:390px;width:1px;height:20px;background:#c8c8c8;"></div>
<div style="left:468px;top:390px;width:1px;height:20px;background:#c8c8c8;"></div>
<span class="t" style="top:393.70px;left:87.5px;letter-spacing:-0.251px;">Гарантия за собой</span>
<span class="t" style="top:393.70px;left:264.5px;">1</span>
<span class="t" style="top:393.70px;left:335.7px;">24400</span>
<span class="t" style="top:393.70px;left:405.5px;">2</span>
<span class="t" style="top:393.70px;left:472.5px;">20000</span>
<div style="left:82px;top:431px;width:455px;height:1px;background:#c8c8c8;"></div>
<div style="left:82px;top:410px;width:1px;height:21px;background:#c8c8c8;"></div>
<div style="left:260px;top:411px;width:1px;height:20px;background:#c8c8c8;"></div>
<div style="left:331px;top:411px;width:1px;height:20px;background:#c8c8c8;"></div>
<div style="left:401px;top:411px;width:1px;height:20px;background:#c8c8c8;"></div>
<div style="left:468px;top:411px;width:1px;height:20px;background:#c8c8c8;"></div>
<span class="t" style="top:414.70px;left:87.5px;letter-spacing:-0.209px;">Гарантия по вине других</span>
<span class="t" style="top:414.70px;left:264.5px;">0</span>
<span class="t" style="top:414.70px;left:335.7px;">0</span>
<span class="t" style="top:414.70px;left:405.5px;">2</span>
<span class="t" style="top:414.70px;left:472.5px;">20000</span>
<div style="left:65px;top:432px;width:472px;height:20px;background:#e8f5e0;"></div>
<div style="left:64px;top:452px;width:473px;height:1px;background:#c8c8c8;"></div>
<div style="left:64px;top:431px;width:1px;height:21px;background:#c8c8c8;"></div>
<div style="left:260px;top:432px;width:1px;height:20px;background:#c8c8c8;"></div>
<div style="left:331px;top:432px;width:1px;height:20px;background:#c8c8c8;"></div>
<div style="left:401px;top:432px;width:1px;height:20px;background:#c8c8c8;"></div>
<div style="left:468px;top:432px;width:1px;height:20px;background:#c8c8c8;"></div>
<span class="t b" style="top:435.70px;left:69px;letter-spacing:-0.082px;">Период 10.04.2021 - 07.05.2021</span>
<svg style="left:51px;top:440px" width="9" height="6" viewBox="0 0 9 6"><path d="M0.7 0.7L4.5 4.5L8.3 0.7" stroke="#333" stroke-width="1.3" fill="none"/></svg>
<span class="t b" style="top:435.70px;left:264.5px;">1</span>
<span class="t b" style="top:435.70px;left:335.7px;">6000</span>
<div style="left:82px;top:473px;width:455px;height:1px;background:#c8c8c8;"></div>
<div style="left:82px;top:452px;width:1px;height:21px;background:#c8c8c8;"></div>
<div style="left:260px;top:453px;width:1px;height:20px;background:#c8c8c8;"></div>
<div style="left:331px;top:453px;width:1px;height:20px;background:#c8c8c8;"></div>
<div style="left:401px;top:453px;width:1px;height:20px;background:#c8c8c8;"></div>
<div style="left:468px;top:453px;width:1px;height:20px;background:#c8c8c8;"></div>
<span class="t" style="top:456.70px;left:87.5px;letter-spacing:-0.251px;">Гарантия за собой</span>
<span class="t" style="top:456.70px;left:264.5px;">0</span>
<span class="t" style="top:456.70px;left:335.7px;">0</span>
<span class="t" style="top:456.70px;left:405.5px;">2</span>
<span class="t" style="top:456.70px;left:472.5px;">20000</span>
<div style="left:82px;top:494px;width:455px;height:1px;background:#c8c8c8;"></div>
<div style="left:82px;top:473px;width:1px;height:21px;background:#c8c8c8;"></div>
<div style="left:260px;top:474px;width:1px;height:20px;background:#c8c8c8;"></div>
<div style="left:331px;top:474px;width:1px;height:20px;background:#c8c8c8;"></div>
<div style="left:401px;top:474px;width:1px;height:20px;background:#c8c8c8;"></div>
<div style="left:468px;top:474px;width:1px;height:20px;background:#c8c8c8;"></div>
<span class="t" style="top:477.70px;left:87.5px;letter-spacing:-0.209px;">Гарантия по вине других</span>
<span class="t" style="top:477.70px;left:264.5px;">1</span>
<span class="t" style="top:477.70px;left:335.7px;">6000</span>
<span class="t" style="top:477.70px;left:405.5px;">2</span>
<span class="t" style="top:477.70px;left:472.5px;">20000</span>
<div style="left:65px;top:495px;width:472px;height:20px;background:#ffe4e1;"></div>
<div style="left:64px;top:515px;width:473px;height:1px;background:#c8c8c8;"></div>
<div style="left:64px;top:494px;width:1px;height:21px;background:#c8c8c8;"></div>
<div style="left:260px;top:495px;width:1px;height:20px;background:#c8c8c8;"></div>
<div style="left:331px;top:495px;width:1px;height:20px;background:#c8c8c8;"></div>
<div style="left:401px;top:495px;width:1px;height:20px;background:#c8c8c8;"></div>
<div style="left:468px;top:495px;width:1px;height:20px;background:#c8c8c8;"></div>
<span class="t b" style="top:498.70px;left:69px;letter-spacing:-0.082px;">Период 13.03.2021 - 10.04.2021</span>
<svg style="left:51px;top:503px" width="9" height="6" viewBox="0 0 9 6"><path d="M0.7 0.7L4.5 4.5L8.3 0.7" stroke="#333" stroke-width="1.3" fill="none"/></svg>
<span class="t b" style="top:498.70px;left:264.5px;">2</span>
<span class="t b" style="top:498.70px;left:335.7px;">48400</span>
<div style="left:83px;top:516px;width:454px;height:20px;background:#ffe4e1;"></div>
<div style="left:82px;top:515px;width:1px;height:21px;background:#c8c8c8;"></div>
<div style="left:260px;top:516px;width:1px;height:20px;background:#c8c8c8;"></div>
<div style="left:331px;top:516px;width:1px;height:20px;background:#c8c8c8;"></div>
<div style="left:401px;top:516px;width:1px;height:20px;background:#c8c8c8;"></div>
<div style="left:468px;top:516px;width:1px;height:20px;background:#c8c8c8;"></div>
<span class="t" style="top:519.70px;left:87.5px;letter-spacing:-0.251px;">Гарантия за собой</span>
<span class="t" style="top:519.70px;left:264.5px;">2</span>
<span class="t" style="top:519.70px;left:335.7px;">48400</span>
<span class="t" style="top:519.70px;left:405.5px;">2</span>
<span class="t" style="top:519.70px;left:472.5px;">20000</span>
<div style="left:45px;top:369px;width:1px;height:167px;background:#a3a3a3;"></div>
<div style="left:537px;top:369px;width:1px;height:167px;background:#c8c8c8;"></div>
<svg style="left:32px;top:375.5px" width="5" height="8" viewBox="0 0 5 8"><path d="M0 0L4.5 4L0 8Z" fill="#666"/></svg>
<div style="left:538px;top:369px;width:17px;height:167px;background:#f0f0f0;"></div>
<div style="left:539px;top:370px;width:15px;height:16px;background:#fff;border:1px solid #a8a8a8;"></div>
<svg style="left:543px;top:375px" width="7" height="4" viewBox="0 0 7 4"><path d="M0 4H7L3.5 0Z" fill="#707070"/></svg>
<div style="left:539px;top:385px;width:15px;height:78px;background:#fff;border:1px solid #a8a8a8;"></div>
<div style="left:539px;top:519px;width:15px;height:16px;background:#fff;border:1px solid #a8a8a8;"></div>
<svg style="left:543px;top:526px" width="7" height="4" viewBox="0 0 7 4"><path d="M0 0H7L3.5 4Z" fill="#555"/></svg>
<div style="left:22px;top:571px;width:534px;height:40px;background:#f0f0f0;border:1px solid #9a9a9a;"></div>
<span class="t" style="top:573.70px;left:24.6px;letter-spacing:-0.363px;">периимплантит ранний</span>
<div style="left:538px;top:574px;width:15px;height:16px;background:#fdfdfd;border:1px solid #e6e6e6;"></div>
<svg style="left:542px;top:579px" width="7" height="4" viewBox="0 0 7 4"><path d="M0 4H7L3.5 0Z" fill="#c8c8c8"/></svg>
<div style="left:538px;top:592px;width:15px;height:16px;background:#fdfdfd;border:1px solid #e6e6e6;"></div>
<svg style="left:542px;top:599px" width="7" height="4" viewBox="0 0 7 4"><path d="M0 0H7L3.5 4Z" fill="#c8c8c8"/></svg>
<span class="t b" style="top:653.70px;left:28px;letter-spacing:0.346px;">Требуется утверждение документа</span>
<div style="left:25px;top:675px;width:200px;height:40px;background:#fff;border:1px solid #8f8f8f;"></div>
<span class="t b" style="top:688.70px;left:83px;letter-spacing:0.170px;">Утвердить решение</span>
<svg style="left:32px;top:679px" width="23" height="30" viewBox="0 0 23 30"><defs><linearGradient id="sb" x1="0" x2="1"><stop offset="0" stop-color="#bdbdbd"/><stop offset=".5" stop-color="#e2e2e2"/><stop offset="1" stop-color="#c4c4c4"/></linearGradient><linearGradient id="sn" x1="0" x2="1"><stop offset="0" stop-color="#352ec0"/><stop offset=".55" stop-color="#5a55e6"/><stop offset="1" stop-color="#3a33c8"/></linearGradient></defs><ellipse cx="10.5" cy="25.2" rx="9.6" ry="3.4" fill="#9c9c9c" opacity=".55"/><path d="M2.9 17.2V24A8.7 3.3 0 0 0 20.3 24V17.2Z" fill="url(#sb)"/><ellipse cx="11.6" cy="17.2" rx="8.7" ry="3.4" fill="#dedede" stroke="#c2c2c2" stroke-width=".5"/><ellipse cx="11.6" cy="17" rx="6" ry="2.3" fill="#f1f1f1" stroke="#cfcfcf" stroke-width=".5"/><path d="M8 8H15.3V16.6Q11.6 18.6 8 16.6Z" fill="url(#sn)"/><ellipse cx="11.9" cy="5.9" rx="5.9" ry="4.9" fill="#4a45d2"/><ellipse cx="11.9" cy="3.6" rx="3.9" ry="2.3" fill="#cfd3e6"/><ellipse cx="11.9" cy="5.6" rx="4.6" ry="1.6" fill="#3932b8" opacity=".6"/></svg>
<div style="left:576px;top:80px;width:1042px;height:22px;background:#d2d2d2;border:1px solid #c8c8c8;border-top-color:#cbcbcb;"></div>
<div style="left:576px;top:102px;width:1px;height:621px;background:#c2c2c2;"></div>
<div style="left:1617px;top:102px;width:1px;height:621px;background:#c4c4c4;"></div>
<span class="t b" style="top:84.70px;left:588px;letter-spacing:0.030px;">Гарантийное лечение</span>
<div style="left:586px;top:111px;width:1022px;height:22px;background:#d2d2d2;border:1px solid #c8c8c8;border-top-color:#cbcbcb;"></div>
<div style="left:586px;top:133px;width:1022px;height:292px;border:1px solid #c9c9c9;border-top:none;"></div>
<span class="t b" style="top:115.70px;left:598px;letter-spacing:0.047px;">Гарантийный случай 1/1.</span>
<div style="left:592px;top:138px;width:1010px;height:22px;background:#d2d2d2;border:1px solid #c8c8c8;border-top-color:#cbcbcb;"></div>
<div style="left:592px;top:160px;width:1010px;height:136px;border:1px solid #c9c9c9;border-top:none;"></div>
<span class="t b" style="top:142.70px;left:604px;letter-spacing:0.066px;">Информация от врача</span>
<div style="left:598px;top:165px;width:501px;height:125px;background:#fff;border:1px solid #a3a3a3;"></div>
<div style="left:599px;top:166px;width:499px;height:22px;background:#f0f0f0;"></div>
<div style="left:598px;top:188px;width:501px;height:1px;background:#a3a3a3;"></div>
<div style="left:621px;top:165px;width:1px;height:108px;background:#a3a3a3;"></div>
<div style="left:904px;top:165px;width:1px;height:24px;background:#a3a3a3;"></div>
<span class="t h" style="top:170.70px;left:625.4px;letter-spacing:-0.209px;">Название</span>
<span class="t h" style="top:170.70px;left:908.7px;letter-spacing:-0.227px;">Значение</span>
<div style="left:905px;top:189px;width:193px;height:20px;background:#d2d2d2;"></div>
<div style="left:640px;top:209px;width:458px;height:1px;background:#c8c8c8;"></div>
<div style="left:640px;top:189px;width:1px;height:21px;background:#c8c8c8;"></div>
<div style="left:904px;top:189px;width:1px;height:21px;background:#c8c8c8;"></div>
<span class="t" style="top:192.70px;left:644.7px;letter-spacing:-0.275px;">Тип гарантии</span>
<span class="t" style="top:192.70px;left:908.7px;letter-spacing:-0.222px;">Гарантия за собой</span>
<div style="left:640px;top:230px;width:458px;height:1px;background:#c8c8c8;"></div>
<div style="left:640px;top:210px;width:1px;height:21px;background:#c8c8c8;"></div>
<div style="left:904px;top:210px;width:1px;height:21px;background:#c8c8c8;"></div>
<span class="t" style="top:213.70px;left:644.7px;letter-spacing:-0.302px;">Стоимость</span>
<span class="t b" style="top:213.70px;left:908.7px;">24 400 ₽</span>
<div style="left:640px;top:251px;width:458px;height:1px;background:#c8c8c8;"></div>
<div style="left:640px;top:231px;width:1px;height:21px;background:#c8c8c8;"></div>
<div style="left:904px;top:231px;width:1px;height:21px;background:#c8c8c8;"></div>
<span class="t" style="top:234.70px;left:644.7px;letter-spacing:-0.125px;">Стоимость работы (сданного наряда)</span>
<span class="t" style="top:234.70px;left:908.7px;">0 ₽</span>
<div style="left:640px;top:272px;width:458px;height:1px;background:#c8c8c8;"></div>
<div style="left:640px;top:252px;width:1px;height:21px;background:#c8c8c8;"></div>
<div style="left:904px;top:252px;width:1px;height:21px;background:#c8c8c8;"></div>
<span class="t" style="top:255.70px;left:644.7px;letter-spacing:-0.190px;">Виновный врач</span>
<svg style="left:908px;top:256px;filter:blur(0.35px);opacity:1.0" width="124" height="12" viewBox="0 0 124 12" shape-rendering="crispEdges"><rect x="4" y="0" width="4" height="4" fill="#cacad0"/><rect x="16" y="0" width="4" height="4" fill="#dedee2"/><rect x="24" y="0" width="4" height="4" fill="#ceced3"/><rect x="44" y="0" width="4" height="4" fill="#d0d0d6"/><rect x="52" y="0" width="4" height="4" fill="#c9c9cf"/><rect x="56" y="0" width="4" height="4" fill="#d3d3d7"/><rect x="96" y="0" width="4" height="4" fill="#d5d5da"/><rect x="100" y="0" width="4" height="4" fill="#d6d6da"/><rect x="104" y="0" width="4" height="4" fill="#d7d7db"/><rect x="116" y="0" width="4" height="4" fill="#c8c8ce"/><rect x="120" y="0" width="4" height="4" fill="#d0d0d5"/><rect x="0" y="4" width="4" height="4" fill="#a0a3ad"/><rect x="4" y="4" width="4" height="4" fill="#a5a7b1"/><rect x="8" y="4" width="4" height="4" fill="#a2a4ae"/><rect x="12" y="4" width="4" height="4" fill="#adafb8"/><rect x="16" y="4" width="4" height="4" fill="#888c98"/><rect x="20" y="4" width="4" height="4" fill="#9c9ea9"/><rect x="24" y="4" width="4" height="4" fill="#848895"/><rect x="28" y="4" width="4" height="4" fill="#9d9fa9"/><rect x="32" y="4" width="4" height="4" fill="#7e8290"/><rect x="36" y="4" width="4" height="4" fill="#848895"/><rect x="40" y="4" width="4" height="4" fill="#e3e3e6"/><rect x="44" y="4" width="4" height="4" fill="#818592"/><rect x="48" y="4" width="4" height="4" fill="#989ba6"/><rect x="52" y="4" width="4" height="4" fill="#7d818f"/><rect x="56" y="4" width="4" height="4" fill="#9c9ea9"/><rect x="60" y="4" width="4" height="4" fill="#adafb8"/><rect x="64" y="4" width="4" height="4" fill="#90939f"/><rect x="68" y="4" width="4" height="4" fill="#888b98"/><rect x="72" y="4" width="4" height="4" fill="#a3a5af"/><rect x="76" y="4" width="4" height="4" fill="#adaeb7"/><rect x="80" y="4" width="4" height="4" fill="#a0a2ac"/><rect x="84" y="4" width="4" height="4" fill="#7e8290"/><rect x="88" y="4" width="4" height="4" fill="#898c99"/><rect x="92" y="4" width="4" height="4" fill="#abacb6"/><rect x="96" y="4" width="4" height="4" fill="#a4a6b0"/><rect x="100" y="4" width="4" height="4" fill="#acadb6"/><rect x="104" y="4" width="4" height="4" fill="#aeafb8"/><rect x="108" y="4" width="4" height="4" fill="#878a97"/><rect x="112" y="4" width="4" height="4" fill="#dadade"/><rect x="116" y="4" width="4" height="4" fill="#999ca7"/><rect x="120" y="4" width="4" height="4" fill="#a7a9b2"/><rect x="0" y="8" width="4" height="4" fill="#c3c3ca"/><rect x="4" y="8" width="4" height="4" fill="#dedee1"/><rect x="8" y="8" width="4" height="4" fill="#c7c7cd"/><rect x="12" y="8" width="4" height="4" fill="#dedee2"/><rect x="16" y="8" width="4" height="4" fill="#d1d1d6"/><rect x="20" y="8" width="4" height="4" fill="#dadade"/><rect x="24" y="8" width="4" height="4" fill="#d8d8dc"/><rect x="28" y="8" width="4" height="4" fill="#b9b9c0"/><rect x="32" y="8" width="4" height="4" fill="#c0c0c7"/><rect x="36" y="8" width="4" height="4" fill="#d6d6db"/><rect x="40" y="8" width="4" height="4" fill="#d1d1d6"/><rect x="44" y="8" width="4" height="4" fill="#dadade"/><rect x="48" y="8" width="4" height="4" fill="#d2d2d7"/><rect x="52" y="8" width="4" height="4" fill="#bebec5"/><rect x="56" y="8" width="4" height="4" fill="#c7c7cd"/><rect x="60" y="8" width="4" height="4" fill="#dfdfe3"/><rect x="64" y="8" width="4" height="4" fill="#b8b8c0"/><rect x="68" y="8" width="4" height="4" fill="#dadade"/><rect x="72" y="8" width="4" height="4" fill="#d8d8dc"/><rect x="76" y="8" width="4" height="4" fill="#c2c2c8"/><rect x="80" y="8" width="4" height="4" fill="#d5d5da"/><rect x="84" y="8" width="4" height="4" fill="#d6d6db"/><rect x="88" y="8" width="4" height="4" fill="#e0e0e4"/><rect x="92" y="8" width="4" height="4" fill="#e0e0e3"/><rect x="96" y="8" width="4" height="4" fill="#cacad0"/><rect x="100" y="8" width="4" height="4" fill="#d9d9dd"/><rect x="104" y="8" width="4" height="4" fill="#c9c9cf"/><rect x="108" y="8" width="4" height="4" fill="#d3d3d8"/><rect x="112" y="8" width="4" height="4" fill="#dddde0"/><rect x="116" y="8" width="4" height="4" fill="#b9b9c1"/><rect x="120" y="8" width="4" height="4" fill="#ceced4"/></svg>
<svg style="left:608px;top:195.5px" width="5" height="8" viewBox="0 0 5 8"><path d="M0 0L4.5 4L0 8Z" fill="#666"/></svg>
<div style="left:1109px;top:165px;width:487px;height:125px;background:#f0f0f0;border:1px solid #a3a3a3;"></div>
<div style="left:1109px;top:188px;width:487px;height:1px;background:#a3a3a3;"></div>
<div style="left:1132px;top:165px;width:1px;height:24px;background:#a3a3a3;"></div>
<div style="left:1192px;top:165px;width:1px;height:24px;background:#a3a3a3;"></div>
<div style="left:1321px;top:165px;width:1px;height:24px;background:#a3a3a3;"></div>
<div style="left:1381px;top:165px;width:1px;height:24px;background:#a3a3a3;"></div>
<div style="left:1451px;top:165px;width:1px;height:24px;background:#a3a3a3;"></div>
<div style="left:1521px;top:165px;width:1px;height:24px;background:#a3a3a3;"></div>
<span class="t h" style="top:170.70px;left:1137.3px;letter-spacing:-0.260px;">Гарантия</span>
<span class="t h" style="top:170.70px;left:1197px;letter-spacing:0.013px;">Услуга</span>
<span class="t h" style="top:170.70px;left:1325.9px;letter-spacing:-0.058px;">Артикул</span>
<span class="t h" style="top:170.70px;left:1385.5px;letter-spacing:-0.087px;">Количество</span>
<span class="t h" style="top:170.70px;left:1455.5px;letter-spacing:-0.036px;">Скидка</span>
<span class="t h" style="top:170.70px;left:1525.5px;letter-spacing:-0.239px;">Без скидки</span>
<div style="left:1110px;top:189px;width:485px;height:63px;background:#fff;"></div>
<div style="left:1193px;top:189px;width:402px;height:20px;background:#d2d2d2;"></div>
<div style="left:1132px;top:209px;width:463px;height:1px;background:#c8c8c8;"></div>
<div style="left:1132px;top:189px;width:1px;height:21px;background:#c8c8c8;"></div>
<div style="left:1192px;top:189px;width:1px;height:21px;background:#c8c8c8;"></div>
<div style="left:1321px;top:189px;width:1px;height:21px;background:#c8c8c8;"></div>
<div style="left:1381px;top:189px;width:1px;height:21px;background:#c8c8c8;"></div>
<div style="left:1451px;top:189px;width:1px;height:21px;background:#c8c8c8;"></div>
<div style="left:1521px;top:189px;width:1px;height:21px;background:#c8c8c8;"></div>
<div style="left:1156px;top:192px;width:14px;height:14px;background:#fff;border:1px solid #a8a8a8;"></div>
<svg style="left:1158px;top:195px" width="10" height="9" viewBox="0 0 10 9"><path d="M1 4.5L3.8 7.5L9 1" stroke="#7c7c7c" stroke-width="1.4" fill="none"/></svg>
<span class="t" style="top:192.70px;left:1196.5px;letter-spacing:-0.200px;">Наложение швов на л...</span>
<span class="t" style="top:192.70px;left:1325.8px;">3834</span>
<span class="t" style="top:192.70px;right:171px;">1</span>
<span class="t" style="top:192.70px;right:101.7px;">900</span>
<span class="t" style="top:192.70px;right:27.7px;">900</span>
<div style="left:1132px;top:230px;width:463px;height:1px;background:#c8c8c8;"></div>
<div style="left:1132px;top:210px;width:1px;height:21px;background:#c8c8c8;"></div>
<div style="left:1192px;top:210px;width:1px;height:21px;background:#c8c8c8;"></div>
<div style="left:1321px;top:210px;width:1px;height:21px;background:#c8c8c8;"></div>
<div style="left:1381px;top:210px;width:1px;height:21px;background:#c8c8c8;"></div>
<div style="left:1451px;top:210px;width:1px;height:21px;background:#c8c8c8;"></div>
<div style="left:1521px;top:210px;width:1px;height:21px;background:#c8c8c8;"></div>
<div style="left:1156px;top:213px;width:14px;height:14px;background:#fff;border:1px solid #a8a8a8;"></div>
<svg style="left:1158px;top:216px" width="10" height="9" viewBox="0 0 10 9"><path d="M1 4.5L3.8 7.5L9 1" stroke="#7c7c7c" stroke-width="1.4" fill="none"/></svg>
<span class="t" style="top:213.70px;left:1196.5px;letter-spacing:-0.202px;">Имплантат с установ...</span>
<span class="t" style="top:213.70px;left:1325.8px;">3113</span>
<span class="t" style="top:213.70px;right:171px;">1</span>
<span class="t" style="top:213.70px;right:101.7px;">23000</span>
<span class="t" style="top:213.70px;right:27.7px;">23000</span>
<div style="left:1132px;top:251px;width:463px;height:1px;background:#a3a3a3;"></div>
<div style="left:1132px;top:231px;width:1px;height:21px;background:#c8c8c8;"></div>
<div style="left:1192px;top:231px;width:1px;height:21px;background:#c8c8c8;"></div>
<div style="left:1321px;top:231px;width:1px;height:21px;background:#c8c8c8;"></div>
<div style="left:1381px;top:231px;width:1px;height:21px;background:#c8c8c8;"></div>
<div style="left:1451px;top:231px;width:1px;height:21px;background:#c8c8c8;"></div>
<div style="left:1521px;top:231px;width:1px;height:21px;background:#c8c8c8;"></div>
<div style="left:1156px;top:234px;width:14px;height:14px;background:#fff;border:1px solid #a8a8a8;"></div>
<svg style="left:1158px;top:237px" width="10" height="9" viewBox="0 0 10 9"><path d="M1 4.5L3.8 7.5L9 1" stroke="#7c7c7c" stroke-width="1.4" fill="none"/></svg>
<span class="t" style="top:234.70px;left:1196.5px;letter-spacing:-0.136px;">Анестезия Ultracain [У...</span>
<span class="t" style="top:234.70px;left:1325.8px;">0902</span>
<span class="t" style="top:234.70px;right:171px;">1</span>
<span class="t" style="top:234.70px;right:101.7px;">500</span>
<span class="t" style="top:234.70px;right:27.7px;">500</span>
<div style="left:1110px;top:251px;width:22px;height:1px;background:#c8c8c8;"></div>
<div style="left:1132px;top:189px;width:1px;height:63px;background:#a3a3a3;"></div>
<svg style="left:1119px;top:195.5px" width="5" height="8" viewBox="0 0 5 8"><path d="M0 0L4.5 4L0 8Z" fill="#666"/></svg>
<div style="left:1453px;top:259px;width:68px;height:24px;background:#fff;border:1px solid #dadada;"></div>
<div style="left:1523px;top:259px;width:66px;height:24px;background:#fff;border:1px solid #dadada;"></div>
<span class="t" style="top:264.70px;right:101.8px;">24400</span>
<span class="t" style="top:264.70px;right:33.8px;">24400</span>
<div style="left:592px;top:300px;width:1010px;height:22px;background:#d2d2d2;border:1px solid #c8c8c8;border-top-color:#cbcbcb;"></div>
<div style="left:592px;top:322px;width:1010px;height:101px;border:1px solid #c9c9c9;border-top:none;"></div>
<span class="t b" style="top:304.70px;left:604px;letter-spacing:-0.241px;">Решение</span>
<span class="t" style="top:337.70px;left:600.8px;letter-spacing:-0.275px;">Тип гарантии</span>
<span class="t" style="top:363.70px;left:600.8px;letter-spacing:-0.190px;">Виновный врач</span>
<span class="t" style="top:389.70px;left:600.8px;letter-spacing:-0.202px;">Виновный техник</span>
<div style="left:735px;top:334px;width:256px;height:20px;background:#fff;border:1px solid #989898;"></div>
<span class="t" style="top:337.70px;left:739px;letter-spacing:-0.222px;">Гарантия за собой</span>
<svg style="left:980.0px;top:343.0px" width="6" height="3" viewBox="0 0 6 3"><path d="M0 0H6L3.0 3Z" fill="#707070"/></svg>
<div style="left:735px;top:360px;width:256px;height:20px;background:#f0f0f0;border:1px solid #adadad;"></div>
<svg style="left:738px;top:364px;filter:blur(0.35px);opacity:1.0" width="128" height="12" viewBox="0 0 128 12" shape-rendering="crispEdges"><rect x="4" y="0" width="4" height="4" fill="#e4e3e8"/><rect x="8" y="0" width="4" height="4" fill="#e8e7ea"/><rect x="24" y="0" width="4" height="4" fill="#e8e8ea"/><rect x="48" y="0" width="4" height="4" fill="#e5e4e8"/><rect x="64" y="0" width="4" height="4" fill="#e3e2e7"/><rect x="68" y="0" width="4" height="4" fill="#e3e2e7"/><rect x="72" y="0" width="4" height="4" fill="#e2e1e6"/><rect x="76" y="0" width="4" height="4" fill="#e7e7ea"/><rect x="80" y="0" width="4" height="4" fill="#e6e5e9"/><rect x="84" y="0" width="4" height="4" fill="#e5e4e8"/><rect x="108" y="0" width="4" height="4" fill="#e3e3e7"/><rect x="116" y="0" width="4" height="4" fill="#e4e3e8"/><rect x="120" y="0" width="4" height="4" fill="#e4e3e7"/><rect x="0" y="4" width="4" height="4" fill="#c3c1ca"/><rect x="4" y="4" width="4" height="4" fill="#cac8d0"/><rect x="8" y="4" width="4" height="4" fill="#d1d0d7"/><rect x="12" y="4" width="4" height="4" fill="#d0cfd6"/><rect x="16" y="4" width="4" height="4" fill="#c7c6ce"/><rect x="20" y="4" width="4" height="4" fill="#cfcdd5"/><rect x="24" y="4" width="4" height="4" fill="#c9c8d0"/><rect x="28" y="4" width="4" height="4" fill="#c5c3cc"/><rect x="32" y="4" width="4" height="4" fill="#cbc9d1"/><rect x="36" y="4" width="4" height="4" fill="#d2d1d8"/><rect x="40" y="4" width="4" height="4" fill="#e9e8eb"/><rect x="44" y="4" width="4" height="4" fill="#cfced5"/><rect x="48" y="4" width="4" height="4" fill="#d1cfd6"/><rect x="52" y="4" width="4" height="4" fill="#cccad2"/><rect x="56" y="4" width="4" height="4" fill="#d4d3d9"/><rect x="60" y="4" width="4" height="4" fill="#c4c2cb"/><rect x="64" y="4" width="4" height="4" fill="#bbb9c3"/><rect x="68" y="4" width="4" height="4" fill="#cbcad1"/><rect x="72" y="4" width="4" height="4" fill="#c2c0c9"/><rect x="76" y="4" width="4" height="4" fill="#bcbac4"/><rect x="80" y="4" width="4" height="4" fill="#d5d3da"/><rect x="84" y="4" width="4" height="4" fill="#d2d1d8"/><rect x="88" y="4" width="4" height="4" fill="#bfbec7"/><rect x="92" y="4" width="4" height="4" fill="#bfbdc6"/><rect x="96" y="4" width="4" height="4" fill="#c4c2cb"/><rect x="100" y="4" width="4" height="4" fill="#d2d0d7"/><rect x="104" y="4" width="4" height="4" fill="#cac9d1"/><rect x="108" y="4" width="4" height="4" fill="#bebcc5"/><rect x="116" y="4" width="4" height="4" fill="#c0bec7"/><rect x="120" y="4" width="4" height="4" fill="#d0cfd6"/><rect x="124" y="4" width="4" height="4" fill="#bebcc6"/><rect x="0" y="8" width="4" height="4" fill="#e5e4e8"/><rect x="4" y="8" width="4" height="4" fill="#e1e0e5"/><rect x="8" y="8" width="4" height="4" fill="#e7e7ea"/><rect x="12" y="8" width="4" height="4" fill="#dedde3"/><rect x="16" y="8" width="4" height="4" fill="#e2e1e6"/><rect x="20" y="8" width="4" height="4" fill="#e1e0e5"/><rect x="24" y="8" width="4" height="4" fill="#e7e6e9"/><rect x="28" y="8" width="4" height="4" fill="#e2e1e6"/><rect x="32" y="8" width="4" height="4" fill="#e2e2e6"/><rect x="36" y="8" width="4" height="4" fill="#e2e1e6"/><rect x="40" y="8" width="4" height="4" fill="#e8e7ea"/><rect x="44" y="8" width="4" height="4" fill="#e1e0e5"/><rect x="48" y="8" width="4" height="4" fill="#e5e4e8"/><rect x="52" y="8" width="4" height="4" fill="#e6e5e9"/><rect x="56" y="8" width="4" height="4" fill="#e7e7ea"/><rect x="60" y="8" width="4" height="4" fill="#e1e0e6"/><rect x="64" y="8" width="4" height="4" fill="#e8e7ea"/><rect x="68" y="8" width="4" height="4" fill="#e6e6e9"/><rect x="72" y="8" width="4" height="4" fill="#e8e8ea"/><rect x="76" y="8" width="4" height="4" fill="#e2e1e6"/><rect x="80" y="8" width="4" height="4" fill="#e3e2e7"/><rect x="84" y="8" width="4" height="4" fill="#e3e2e7"/><rect x="88" y="8" width="4" height="4" fill="#e9e8eb"/><rect x="92" y="8" width="4" height="4" fill="#e4e3e7"/><rect x="96" y="8" width="4" height="4" fill="#e5e4e8"/><rect x="100" y="8" width="4" height="4" fill="#e8e7ea"/><rect x="104" y="8" width="4" height="4" fill="#e9e8eb"/><rect x="108" y="8" width="4" height="4" fill="#dedde3"/><rect x="112" y="8" width="4" height="4" fill="#eae9eb"/><rect x="116" y="8" width="4" height="4" fill="#e6e5e9"/><rect x="120" y="8" width="4" height="4" fill="#e6e5e9"/><rect x="124" y="8" width="4" height="4" fill="#e2e1e6"/></svg>
<svg style="left:980.0px;top:369.0px" width="6" height="3" viewBox="0 0 6 3"><path d="M0 0H6L3.0 3Z" fill="#bcbcbc"/></svg>
<div style="left:735px;top:386px;width:256px;height:20px;background:#f0f0f0;border:1px solid #adadad;"></div>
<svg style="left:980.0px;top:395.0px" width="6" height="3" viewBox="0 0 6 3"><path d="M0 0H6L3.0 3Z" fill="#bcbcbc"/></svg>
<div style="left:997px;top:334px;width:596px;height:22px;background:#d2d2d2;border:1px solid #c8c8c8;border-top-color:#cbcbcb;"></div>
<div style="left:997px;top:356px;width:1px;height:64px;background:#c9c9c9;"></div>
<div style="left:1592px;top:356px;width:1px;height:64px;background:#c9c9c9;"></div>
<span class="t b" style="top:338.70px;left:1009px;letter-spacing:0.041px;">Удержания и начисления</span>
<div style="left:1004px;top:362px;width:150px;height:23px;background:#fff;border:1px solid #999;"></div>
<div style="left:1171px;top:362px;width:150px;height:23px;background:#f0f0f0;border:1px solid #c6c6c6;"></div>
<div style="left:1004px;top:392px;width:150px;height:23px;background:#fff;border:1px solid #999;"></div>
<div style="left:1171px;top:392px;width:150px;height:23px;background:#fff;border:1px solid #999;"></div>
<span class="t" style="top:367.70px;left:1019.9px;letter-spacing:-0.042px;">Удержание врачу 50%</span>
<span class="t" style="top:367.70px;left:1181px;color:#8c8c8c;letter-spacing:-0.069px;">Удержание технику 50%</span>
<span class="t" style="top:397.70px;left:1050px;letter-spacing:-0.248px;">Удержание</span>
<span class="t" style="top:397.70px;left:1215px;letter-spacing:-0.214px;">Начисление</span>
<div style="left:586px;top:429px;width:1022px;height:22px;background:#d2d2d2;border:1px solid #c8c8c8;border-top-color:#cbcbcb;"></div>
<div style="left:586px;top:451px;width:1022px;height:139px;background:#fff;border:1px solid #c8c8c8;border-top:none;"></div>
<div style="left:588px;top:453px;width:1019px;height:22px;background:#f0f0f0;"></div>
<div style="left:588px;top:452px;width:1019px;height:1px;background:#a3a3a3;"></div>
<div style="left:587px;top:475px;width:1020px;height:1px;background:#a3a3a3;"></div>
<div style="left:610px;top:452px;width:1px;height:23px;background:#a3a3a3;"></div>
<div style="left:789px;top:452px;width:1px;height:23px;background:#a3a3a3;"></div>
<div style="left:909px;top:452px;width:1px;height:23px;background:#a3a3a3;"></div>
<div style="left:1485px;top:452px;width:1px;height:23px;background:#a3a3a3;"></div>
<span class="t b" style="top:433.70px;left:598px;letter-spacing:0.041px;">Удержания и начисления</span>
<span class="t h" style="top:457.70px;left:614.8px;letter-spacing:-0.052px;">Статус</span>
<span class="t h" style="top:457.70px;left:794.2px;letter-spacing:-0.330px;">Тип начисления</span>
<span class="t h" style="top:457.70px;left:913.4px;letter-spacing:-0.066px;">Сотрудник</span>
<span class="t h" style="top:457.70px;left:1490px;letter-spacing:-0.453px;">Сумма</span>
</body></html>
